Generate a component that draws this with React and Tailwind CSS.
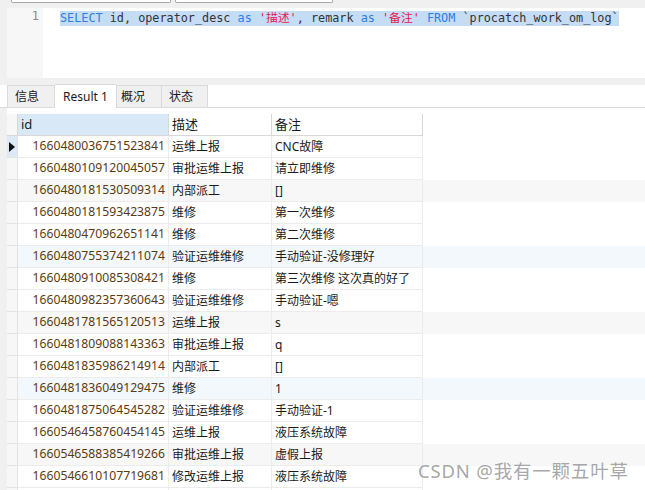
import React from "react";

const rows = [
  ["1660480036751523841", "运维上报", "CNC故障"],
  ["1660480109120045057", "审批运维上报", "请立即维修"],
  ["1660480181530509314", "内部派工", "[]"],
  ["1660480181593423875", "维修", "第一次维修"],
  ["1660480470962651141", "维修", "第二次维修"],
  ["1660480755374211074", "验证运维维修", "手动验证-没修理好"],
  ["1660480910085308421", "维修", "第三次维修 这次真的好了"],
  ["1660480982357360643", "验证运维维修", "手动验证-嗯"],
  ["1660481781565120513", "运维上报", "s"],
  ["1660481809088143363", "审批运维上报", "q"],
  ["1660481835986214914", "内部派工", "[]"],
  ["1660481836049129475", "维修", "1"],
  ["1660481875064545282", "验证运维维修", "手动验证-1"],
  ["1660546458760454145", "运维上报", "液压系统故障"],
  ["1660546588385419266", "审批运维上报", "虚假上报"],
  ["1660546610107719681", "修改运维上报", "液压系统故障"],
  ["", "", ""],
];

function rowBg(i) {
  const n = i + 1;
  if (n % 6 === 3) return "bg-[#f7f7f7]";
  if (n % 6 === 0) return "bg-[#f3f8fd]";
  return "bg-white";
}

export default function App() {
  return (
    <div
      className="relative w-[645px] h-[490px] overflow-hidden bg-[#f0f0f0] text-[12px] text-[#1a1a1a]"
      style={{ fontFamily: '"Noto Sans", "Noto Sans CJK SC", sans-serif' }}
    >
      {/* top input edges */}
      <div className="flex gap-[4px] pl-[11px] h-[8px]">
        <div className="w-[160px] h-[3px] bg-white border-x border-b border-[#a8a8a8] rounded-b-[2px]" />
        <div className="w-[158px] h-[3px] bg-white border-x border-b border-[#a8a8a8] rounded-b-[2px]" />
      </div>

      {/* editor */}
      <div className="ml-[7px] h-[70px] bg-white flex">
        <div className="w-[36px] bg-[#f7f7f7] text-right pr-[4px] pt-[1px] text-[#8a8a8a] text-[12px] leading-[15px]" style={{ fontFamily: '"DejaVu Sans Mono", monospace' }}>
          1
        </div>
        <div className="pl-[17px] pt-[1px]">
          <span
            className="bg-[#c5dcf5] text-[11.8px] leading-[15px] whitespace-pre text-[#333] inline-block"
            style={{ fontFamily: '"DejaVu Sans Mono", "Noto Sans CJK SC", monospace' }}
          >
            <span className="text-[#2b7fe0]">SELECT</span> id, operator_desc{" "}
            <span className="text-[#2b7fe0]">as</span>{" "}
            <span className="text-[#e8174f]">'描述'</span>, remark{" "}
            <span className="text-[#2b7fe0]">as</span>{" "}
            <span className="text-[#e8174f]">'备注'</span>{" "}
            <span className="text-[#2b7fe0]">FROM</span> `procatch_work_om_log`
          </span>
        </div>
      </div>

      <div className="h-[5px]" />

      {/* tabs */}
      <div className="flex items-end h-[25px] border-b border-[#dcdcdc]">
        <div className="w-[7px] h-[22px] bg-white" />
        <div className="w-[48px] h-[22px] bg-[#f0f0f0] border border-b-0 border-[#d9d9d9] flex items-center pl-[7px]">信息</div>
        <div className="w-[61px] h-[24px] bg-white border-t border-[#d9d9d9] flex items-center pl-[8px] -mb-px relative">Result 1</div>
        <div className="w-[46px] h-[22px] bg-[#f0f0f0] border border-b-0 border-[#d9d9d9] flex items-center pl-[4px]">概况</div>
        <div className="w-[46px] h-[22px] bg-[#f0f0f0] border border-l-0 border-b-0 border-[#d9d9d9] flex items-center pl-[7px]">状态</div>
        <div className="flex-1 h-[22px] bg-white" />
      </div>

      {/* grid */}
      <div className="ml-[7px] h-[400px] bg-white pt-[6px]">
        <div className="flex h-[22px] text-[13px]">
          <div className="w-[11px] bg-[#f7f7f7] border-r border-b border-[#d8d8d8]" />
          <div className="w-[151px] bg-[#d9e8f7] border-r border-b border-[#d8d8d8] pl-[3px] flex items-center">id</div>
          <div className="w-[103px] bg-white border-r border-b border-[#d8d8d8] pl-[3px] flex items-center">描述</div>
          <div className="w-[151px] bg-white border-r border-b border-[#d8d8d8] pl-[3px] flex items-center">备注</div>
        </div>
        {rows.map((r, i) => (
          <div key={i} className={`flex h-[22px] ${rowBg(i)}`}>
            <div
              className={`w-[11px] border-r border-b border-[#e3e3e3] flex items-center justify-center ${
                i === 0 ? "bg-[#dce9f6]" : "bg-[#f7f7f7]"
              }`}
            >
              {i === 0 && (
                <svg width="6" height="10" viewBox="0 0 6 10">
                  <path d="M0 0 L6 5 L0 10 Z" fill="#111" />
                </svg>
              )}
            </div>
            <div className="w-[151px] border-r border-b border-[#ececec] pr-[3px] flex items-center justify-end text-[#5b3a12] text-[12.2px]">
              {r[0]}
            </div>
            <div className="w-[103px] border-r border-b border-[#ececec] pl-[3px] flex items-center whitespace-nowrap overflow-hidden">
              {r[1]}
            </div>
            <div className="w-[151px] border-r border-b border-[#ececec] pl-[3px] flex items-center whitespace-nowrap overflow-hidden">
              {r[2]}
            </div>
          </div>
        ))}
      </div>

      {/* watermark */}
      <div className="absolute left-[418px] top-[460px] text-[18.5px] leading-[22px] tracking-[0.8px] text-[#9c9c9c]/90 whitespace-nowrap">
        CSDN @我有一颗五叶草
      </div>
    </div>
  );
}
